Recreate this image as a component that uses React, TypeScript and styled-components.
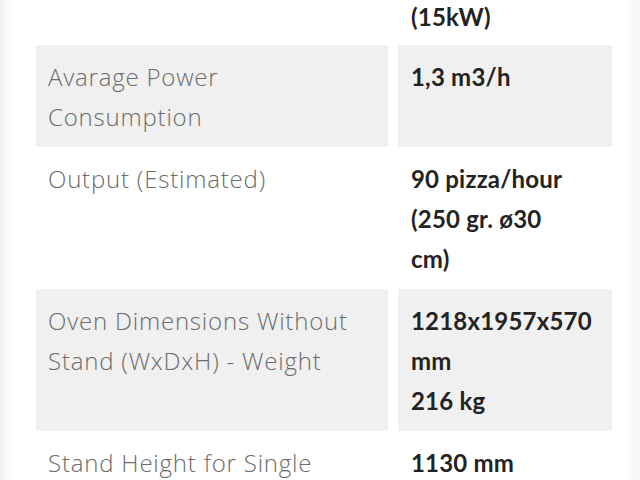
import { createGlobalStyle } from "styled-components";
import styled from "styled-components";

type Spec = {
  label: string[];
  value: string[];
};

const specs: Spec[] = [
  { label: [], value: ["(15kW)"] },
  { label: ["Avarage Power", "Consumption"], value: ["1,3 m3/h"] },
  { label: ["Output (Estimated)"], value: ["90 pizza/hour", "(250 gr. ø30", "cm)"] },
  {
    label: ["Oven Dimensions Without", "Stand (WxDxH) - Weight"],
    value: ["1218x1957x570", "mm", "216 kg"],
  },
  { label: ["Stand Height for Single"], value: ["1130 mm"] },
];

function App() {
  return (
    <>
      <GlobalStyle />
      <Page>
        <Table>
          {specs.map((spec, index) => (
            <Row key={index}>
              <LabelCell $shaded={index % 2 === 1} $first={index === 0}>
                {spec.label.map((line) => (
                  <Line key={line}>{line}</Line>
                ))}
              </LabelCell>
              <ValueCell $shaded={index % 2 === 1} $first={index === 0}>
                {spec.value.map((line) => (
                  <Line key={line}>{line}</Line>
                ))}
              </ValueCell>
            </Row>
          ))}
        </Table>
      </Page>
    </>
  );
}

const GlobalStyle = createGlobalStyle`
  html, body {
    margin: 0;
    padding: 0;
    background: #ffffff;
    overflow: hidden;
  }
`;

const Page = styled.div`
  width: 640px;
  height: 480px;
  overflow: hidden;
  background: linear-gradient(
    to right,
    #f1f1f1 0px,
    #fbfbfb 8px,
    #ffffff 13px,
    #ffffff 627px,
    #f7f7f7 632px,
    #f9f9f9 640px
  );
`;

const Table = styled.div`
  display: flex;
  flex-direction: column;
  width: 576px;
  margin: -3px 0 0 36px;
`;

const Row = styled.div`
  display: grid;
  grid-template-columns: 352px 214px;
  column-gap: 10px;
`;

const Cell = styled.div<{ $shaded: boolean; $first: boolean }>`
  padding: ${({ $first }) => ($first ? "0 12px 8px" : "12px 12px 10px")};
  background: ${({ $shaded }) => ($shaded ? "#f0f0f0" : "transparent")};
  font-size: 24px;
  line-height: 40px;
`;

const LabelCell = styled(Cell)`
  font-family: "Open Sans", "Lato", sans-serif;
  font-weight: 300;
  letter-spacing: 0.8px;
  color: #6c6c6c;
`;

const ValueCell = styled(Cell)`
  padding-left: 13px;
  font-family: "Lato", "Open Sans", sans-serif;
  font-weight: 700;
  letter-spacing: 0.2px;
  color: #232323;
`;

const Line = styled.div`
  white-space: nowrap;
`;

export default App;
